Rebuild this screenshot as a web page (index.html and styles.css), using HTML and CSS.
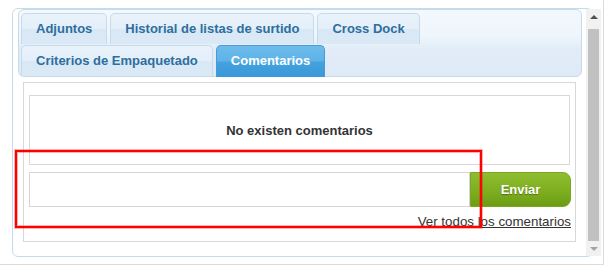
FILE: index.html
```html
<html><head>
    <link rel="stylesheet" href="styles.css">
</head><body>
    <div class="frame">
        <div class="tabs">
            <ul class="tab-nav">
                <li class="tab">Adjuntos</li>
                <li class="tab">Historial de listas de surtido</li>
                <li class="tab">Cross Dock</li>
                <li class="tab">Criterios de Empaquetado</li>
                <li class="tab active">Comentarios</li>
            </ul>
            <div class="panel">
                <div class="empty">No existen comentarios</div>
                <div class="send-row">
                    <input class="comment-input" type="text">
                    <button class="send-btn">Enviar</button>
                </div>
                <div class="all-link">
                    <a href="#">Ver todos los comentarios</a>
                </div>
            </div>
        </div>
        <div class="scrollbar">
            <div class="arrow-up"></div>
            <div class="thumb"></div>
            <div class="arrow-down"></div>
        </div>
        <div class="highlight"></div>
    </div>
</body></html>
```
FILE: styles.css
```css
body {
    margin: 0;
    background: #fff;
    font-family: "Liberation Sans", Arial, sans-serif;
    font-size: 13px;
}

.frame {
    position: relative;
    box-sizing: border-box;
    width: 604px;
    height: 265px;
    padding: 8px 0 0 12px;
    border-right: 1px solid #dcdcdc;
    border-bottom: 1px solid #dcdcdc;
}

.tabs {
    box-sizing: border-box;
    width: 581px;
    border: 1px solid #c5dbec;
    border-radius: 6px;
    padding: 0 10px 14px 5px;
}

.tab-nav {
    list-style: none;
    margin: 0;
    padding: 3px 2px 0;
    display: flex;
    flex-wrap: wrap;
    column-gap: 3px;
    row-gap: 1px;
    border: 1px solid #c5dbec;
    border-radius: 6px;
    background: linear-gradient(#f3f8fd, #eef5fb 40%, #e1ecf7 60%, #deeaf6);
}

.tab {
    height: 30px;
    line-height: 30px;
    padding: 0 14px;
    border: 1px solid #c5dbec;
    border-bottom: 0;
    border-radius: 5px 5px 0 0;
    background: linear-gradient(#e9f2fb, #e4eff9 48%, #d9e8f6 52%, #dbe9f6);
    color: #2e6e9e;
    font-weight: bold;
}

.tab.active {
    padding-bottom: 1px;
    margin-bottom: -1px;
    border-color: #4a9ad6;
    background: linear-gradient(#6dbcec, #5eb2e8 48%, #44a2df 52%, #3a98d8);
    color: #fff;
}

.panel {
    margin: 5px 6px 0 5px;
    border: 1px solid #d8d8d8;
    padding: 12px 5px 11px;
}

.empty {
    height: 68px;
    border: 1px solid #d8d8d8;
    display: flex;
    align-items: center;
    justify-content: center;
    font-weight: bold;
    color: #333;
}

.send-row {
    margin-top: 7px;
    display: flex;
    height: 35px;
}

.comment-input {
    flex: 1;
    box-sizing: border-box;
    height: 35px;
    margin: 0;
    border: 1px solid #d5d5d5;
    outline: none;
}

.send-btn {
    box-sizing: border-box;
    width: 101px;
    height: 35px;
    margin: 0 -1px 0 0;
    border: 1px solid #79a820;
    border-radius: 0 8px 8px 0;
    background: linear-gradient(#8fbd31, #7fb021 50%, #6d9c14);
    color: #fff;
    font-family: "Liberation Sans", Arial, sans-serif;
    font-size: 13px;
    font-weight: bold;
    text-shadow: 0 1px 1px rgba(0, 0, 0, .35);
}

.all-link {
    margin-top: 7px;
    margin-right: -1px;
    line-height: 16px;
    text-align: right;
    font-size: 13.33px;
}

.all-link a {
    color: #333;
}

.scrollbar {
    position: absolute;
    left: 586px;
    top: 9px;
    width: 15px;
    height: 247px;
    background: #f1f1f1;
}

.thumb {
    position: absolute;
    left: 2px;
    top: 20px;
    width: 11px;
    height: 212px;
    background: #c1c1c1;
}

.arrow-up,
.arrow-down {
    position: absolute;
    left: 4px;
    width: 0;
    height: 0;
    border-left: 4px solid transparent;
    border-right: 4px solid transparent;
}

.arrow-up {
    top: 6px;
    border-bottom: 4px solid #505050;
}

.arrow-down {
    top: 238px;
    border-top: 4px solid #a3a3a3;
}

.highlight {
    position: absolute;
    left: 15px;
    top: 150px;
    width: 467px;
    height: 78px;
    box-sizing: border-box;
    border: 2px solid #f00;
    box-shadow: 0 0 0 1px rgba(255, 0, 0, .3), inset 0 0 0 1px rgba(255, 0, 0, .3);
}
```
